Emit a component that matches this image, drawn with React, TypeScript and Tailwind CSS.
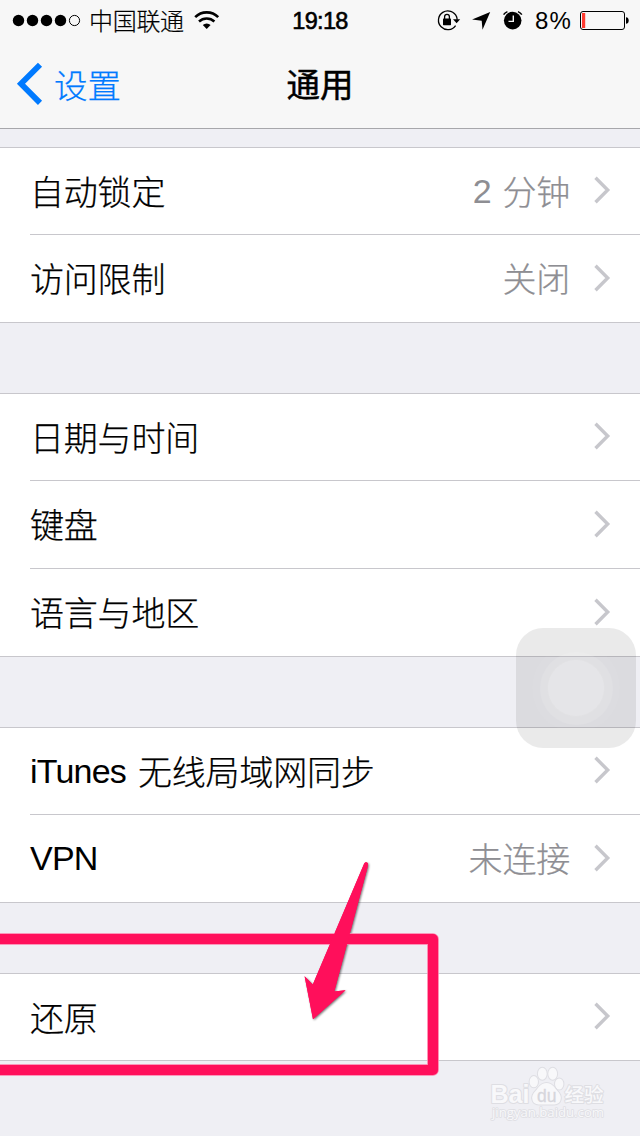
type Row = {
  latin?: string;
  label?: string;
  valueLatin?: string;
  value?: string;
};

const sections: Row[][] = [
  [
    { label: '自动锁定', valueLatin: '2', value: '分钟' },
    { label: '访问限制', value: '关闭' },
  ],
  [{ label: '日期与时间' }, { label: '键盘' }, { label: '语言与地区' }],
  [{ latin: 'iTunes', label: '无线局域网同步' }, { latin: 'VPN', value: '未连接' }],
  [{ label: '还原' }],
];

const arrowPath =
  'M364.2 863.5Q366 861 368 863.5L367.4 868 334.3 991.6 345.5 990.3 313 1019.2 304.6 976.2 312.8 984.6z';

function StatusBar() {
  return (
    <div className="relative flex h-10 items-center">
      <svg className="ml-3 shrink-0" width="70" height="14" viewBox="0 0 70 14">
        {[6.5, 20.5, 34.5, 48.5].map((cx) => (
          <circle key={cx} cx={cx} cy="7.5" r="5.7" />
        ))}
        <circle cx="62.5" cy="7.5" r="5.1" fill="none" stroke="#000" strokeWidth="1" />
      </svg>
      <span className="-mt-px ml-[7px] text-[24px] leading-10 font-light tracking-[-0.3px] [-webkit-text-stroke:0.2px_currentColor]">
        中国联通
      </span>
      <svg className="absolute top-[10px] left-[194px]" width="26" height="20" viewBox="0 0 26 20" fill="none" stroke="#000">
        <path d="M1.2 7.2a16.2 16.2 0 0 1 23 0" strokeWidth="2.6" />
        <path d="M5 11.5a11.2 11.2 0 0 1 15.4 0" strokeWidth="2.5" />
        <path d="M12.7 19l-3.9-4a5.6 5.6 0 0 1 7.8 0z" fill="#000" stroke="none" />
      </svg>
      <span className="absolute inset-x-0 top-px text-center font-['Liberation_Sans'] text-[23.5px] leading-10 tracking-[-0.7px] [-webkit-text-stroke:0.6px_#000]">
        19:18
      </span>
      <svg className="absolute top-2 left-[436px]" width="92" height="24" viewBox="0 0 92 24">
        <path d="M19.6 17.6a9.4 9.4 0 1 1 1-8.8q.5 1.400.5 3" fill="none" stroke="#000" strokeWidth="1.3" />
        <path d="M17 11.200h7.200l-3.600 4z" />
        <rect x="7" y="10.6" width="8" height="6.6" rx="0.6" />
        <path d="M8.6 11V8.8a2.4 2.4 0 0 1 4.8 0V11" fill="none" stroke="#000" strokeWidth="1.3" />
        <path d="M54.2 4L46.5 21.7l-.8-8.9-9.6-1.3z" />
        <circle cx="76.7" cy="12.6" r="8.8" />
        <path d="M67.6 6.600q1.200-2 3.800-3M85.800 6.600q-1.200-2-3.800-3" fill="none" stroke="#000" strokeWidth="1.5" />
        <path d="M77.3 7.5v5.9h-4.8" fill="none" stroke="#f7f7f7" strokeWidth="1.4" />
      </svg>
      <span className="absolute top-px left-[535px] font-['Liberation_Sans'] text-[24px] leading-10 tracking-[1.2px]">8%</span>
      <svg className="absolute top-[10px] left-[579px]" width="52" height="21" viewBox="0 0 52 21">
        <rect x="1.5" y="1.5" width="44" height="18" rx="2.5" fill="none" stroke="#000" />
        <rect x="3" y="3" width="3.2" height="15" fill="#ff3b30" />
        <path d="M47 7.2c1.6 0 2.7 1.2 2.7 3.3s-1.1 3.3-2.7 3.3z" />
      </svg>
    </div>
  );
}

function NavBar() {
  return (
    <div className="relative flex h-[88px] items-center">
      <svg className="ml-4 shrink-0 text-[#007aff]" width="28" height="44" viewBox="0 0 28 44">
        <path d="M24 2.7L5 21.8l19 19.1" fill="none" stroke="currentColor" strokeWidth="5.8" />
      </svg>
      <span className="ml-[10px] text-[33.5px] leading-[86px] font-light text-[#007aff] [-webkit-text-stroke:0.25px_currentColor]">
        设置
      </span>
      <h1 className="absolute inset-x-0 top-0 text-center text-[33.5px] leading-[86px] font-normal [-webkit-text-stroke:0.5px_currentColor]">
        通用
      </h1>
    </div>
  );
}

function ListRow({ row, first, last }: { row: Row; first: boolean; last: boolean }) {
  return (
    <li className={`pl-[30px] ${first ? 'h-[87px]' : 'h-[88px]'} ${last ? 'border-b border-[#c8c7cc]' : ''}`}>
      <div className={`flex h-full items-center pr-[29px] ${last ? '' : 'border-b border-[#c8c7cc]'}`}>
        <span className="-mt-px flex items-center">
          {row.latin && (
            <span className="mr-3 font-['Liberation_Sans'] text-[34px] tracking-[-0.8px] [-webkit-text-stroke:0]">
              {row.latin}
            </span>
          )}
          {row.label}
        </span>
        <span className="-mt-px ml-auto flex items-center text-[#8e8e93]">
          {row.valueLatin && (
            <span className="mr-[11px] font-['Liberation_Sans'] text-[34px] [-webkit-text-stroke:0]">{row.valueLatin}</span>
          )}
          {row.value}
        </span>
        <svg className="-mt-[2px] ml-[23px] shrink-0" width="18" height="28" viewBox="0 0 18 28">
          <path d="M2.5 1.8L14.7 14 2.5 26.2" fill="none" stroke="#c7c7cc" strokeWidth="3.4" />
        </svg>
      </div>
    </li>
  );
}

function AssistiveTouch() {
  return (
    <div className="absolute top-[628px] left-[516px] flex size-[120px] items-center justify-center rounded-[27px] bg-black/[0.082]">
      <div className="flex size-[88px] items-center justify-center rounded-full bg-white/[0.03]">
        <div className="flex size-[73px] items-center justify-center rounded-full bg-white/10">
          <div className="size-[58px] rounded-full border border-black/[0.02] bg-white/[0.18]" />
        </div>
      </div>
    </div>
  );
}

function Annotation() {
  return (
    <svg className="absolute top-[850px] left-0" width="450" height="240" viewBox="0 850 450 240">
      <path className="drop-shadow-[1px_1px_1px_rgba(0,0,0,0.55)]" d={arrowPath} fill="#ff0f5b" />
      <g fill="none" strokeLinejoin="round">
        <path d="M-10 939H433V1070H-10" stroke="#ff7ba6" strokeWidth="11.6" />
        <path d="M-10 939H433V1070H-10" stroke="#ff0f5b" strokeWidth="10" />
      </g>
      <path d={arrowPath} fill="#ff0f5b" />
    </svg>
  );
}

function Watermark() {
  return (
    <svg className="absolute top-[1062px] left-[486px]" width="126" height="62" viewBox="0 0 126 62">
      <g fill="#f8f8fa" stroke="#dedee3" strokeWidth="2" strokeLinejoin="round" paintOrder="stroke">
        <text x="4.5" y="40.5" fontFamily="Liberation Sans" fontWeight="700" fontSize="25" textLength="39" lengthAdjust="spacingAndGlyphs">
          Bai
        </text>
        <ellipse cx="47.8" cy="19.700" rx="4.200" ry="5.600" />
        <ellipse cx="56.3" cy="11.8" rx="4.4" ry="6" />
        <ellipse cx="66.700" cy="11.8" rx="4.400" ry="6" />
        <ellipse cx="73.2" cy="22" rx="4.2" ry="5.5" />
        <path d="M60.5 21c5.500 0 7.500 4 10.500 7.500 3.500 3.500 4.500 6.500 3.500 9.500-1 3.500-4 4.500-7.500 4.500h-13c-3.500 0-6.500-1-7.500-4.500-1-3 0-6 3.500-9.500C53 25 55 21 60.500 21z" />
        <text x="78.5" y="40" fontFamily="Noto Sans CJK SC" fontWeight="500" fontSize="19.5">
          经验
        </text>
        <text x="6" y="55" fontFamily="Open Sans" fontSize="13" strokeWidth="1.6" textLength="112" lengthAdjust="spacingAndGlyphs">
          jingyan.baidu.com
        </text>
      </g>
      <text x="51" y="39.5" fontFamily="Liberation Sans" fontSize="17.5" fill="#d6d6dc" stroke="#d6d6dc" strokeWidth="0.3">
        du
      </text>
    </svg>
  );
}

export default function App() {
  return (
    <div className="relative h-[1136px] w-[640px] overflow-hidden bg-[#efeff4] font-['Noto_Sans_CJK_SC',sans-serif] text-black">
      <header className="h-[129px] border-b border-[#a7a7ab] bg-[#f7f7f7]">
        <StatusBar />
        <NavBar />
      </header>

      <main className="pt-[18px] text-[34px] leading-[50px] font-light tracking-[-0.2px] [-webkit-text-stroke:0.25px_currentColor]">
        {sections.map((rows, i) => (
          <ul key={i} className="mb-[70px] border-t border-[#c8c7cc] bg-white">
            {rows.map((row, j) => (
              <ListRow key={j} row={row} first={j === 0} last={j === rows.length - 1} />
            ))}
          </ul>
        ))}
      </main>

      <AssistiveTouch />
      <Annotation />
      <Watermark />
    </div>
  );
}
